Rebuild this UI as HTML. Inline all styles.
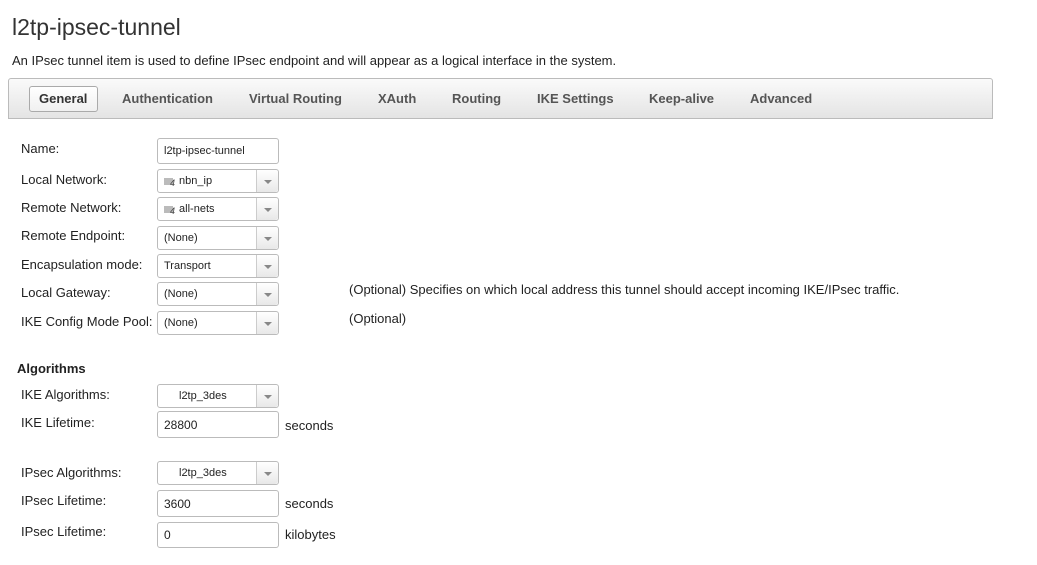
<!DOCTYPE html><html><head><style>
body{margin:0;width:1037px;height:565px;background:#fff;font-family:"Liberation Sans",Arial,sans-serif;color:#222;position:relative;overflow:hidden}
.a{position:absolute;white-space:nowrap}
.lbl{font-size:13px;color:#222}
.in{position:absolute;left:157px;width:122px;border:1px solid #bbb;border-radius:3px;background:#fff;font-size:11px;box-sizing:border-box}
.in span{position:absolute;left:6px;top:50%;transform:translateY(-50%)}
.sel .dd{position:absolute;right:0;top:0;bottom:0;width:21px;border-left:1px solid #ccc;background:linear-gradient(#fff,#e8e8e8);border-radius:0 3px 3px 0}
.sel .dd:after{content:"";position:absolute;left:7px;top:10px;border:4px solid transparent;border-top:4px solid #888;border-bottom:0}
.ic{display:inline-block;width:9px;height:7px;background:#bbb;margin-right:3px;vertical-align:-1px;position:relative}
.ic:after{content:"4";position:absolute;left:6px;top:0;font-size:9px;color:#444}
.tab{position:absolute;top:91px;font-size:13px;font-weight:bold;color:#555}
</style></head><body>
<div class="a" style="left:12px;top:14px;font-size:23px;color:#333">l2tp-ipsec-tunnel</div>
<div class="a" style="left:12px;top:53px;font-size:13px">An IPsec tunnel item is used to define IPsec endpoint and will appear as a logical interface in the system.</div>
<div class="a" style="left:8px;top:78px;width:983px;height:39px;border:1px solid #bbb;border-radius:3px 3px 0 0;background:linear-gradient(#fafafa,#e4e4e4)"></div>
<div class="a" style="left:29px;top:86px;width:67px;height:24px;border:1px solid #aaa;border-radius:3px;background:linear-gradient(#fff,#f0f0f0)"></div>
<div class="tab" style="left:39px;color:#333">General</div>
<div class="tab" style="left:122px">Authentication</div>
<div class="tab" style="left:249px">Virtual Routing</div>
<div class="tab" style="left:378px">XAuth</div>
<div class="tab" style="left:452px">Routing</div>
<div class="tab" style="left:537px">IKE Settings</div>
<div class="tab" style="left:649px">Keep-alive</div>
<div class="tab" style="left:750px">Advanced</div>

<div class="a lbl" style="left:21px;top:141px">Name:</div>
<div class="in" style="top:138px;height:26px"><span>l2tp-ipsec-tunnel</span></div>
<div class="a lbl" style="left:21px;top:172px">Local Network:</div>
<div class="in sel" style="top:169px;height:24px"><span><i class="ic"></i> nbn_ip</span><div class="dd"></div></div>
<div class="a lbl" style="left:21px;top:200px">Remote Network:</div>
<div class="in sel" style="top:197px;height:24px"><span><i class="ic"></i> all-nets</span><div class="dd"></div></div>
<div class="a lbl" style="left:21px;top:228px">Remote Endpoint:</div>
<div class="in sel" style="top:226px;height:24px"><span>(None)</span><div class="dd"></div></div>
<div class="a lbl" style="left:21px;top:257px">Encapsulation mode:</div>
<div class="in sel" style="top:254px;height:24px"><span>Transport</span><div class="dd"></div></div>
<div class="a lbl" style="left:21px;top:285px">Local Gateway:</div>
<div class="in sel" style="top:282px;height:24px"><span>(None)</span><div class="dd"></div></div>
<div class="a lbl" style="left:349px;top:282px">(Optional) Specifies on which local address this tunnel should accept incoming IKE/IPsec traffic.</div>
<div class="a lbl" style="left:21px;top:314px">IKE Config Mode Pool:</div>
<div class="in sel" style="top:311px;height:24px"><span>(None)</span><div class="dd"></div></div>
<div class="a lbl" style="left:349px;top:311px">(Optional)</div>

<div class="a" style="left:17px;top:361px;font-size:13px;font-weight:bold">Algorithms</div>
<div class="a lbl" style="left:21px;top:387px">IKE Algorithms:</div>
<div class="in sel" style="top:384px;height:24px"><span style="left:21px">l2tp_3des</span><div class="dd"></div></div>
<div class="a lbl" style="left:21px;top:415px">IKE Lifetime:</div>
<div class="in" style="top:411px;height:27px;font-size:12px"><span>28800</span></div>
<div class="a lbl" style="left:285px;top:418px">seconds</div>
<div class="a lbl" style="left:21px;top:465px">IPsec Algorithms:</div>
<div class="in sel" style="top:461px;height:24px"><span style="left:21px">l2tp_3des</span><div class="dd"></div></div>
<div class="a lbl" style="left:21px;top:493px">IPsec Lifetime:</div>
<div class="in" style="top:490px;height:27px;font-size:12px"><span>3600</span></div>
<div class="a lbl" style="left:285px;top:496px">seconds</div>
<div class="a lbl" style="left:21px;top:524px">IPsec Lifetime:</div>
<div class="in" style="top:522px;height:26px;font-size:12px"><span>0</span></div>
<div class="a lbl" style="left:285px;top:527px">kilobytes</div>
</body></html>
